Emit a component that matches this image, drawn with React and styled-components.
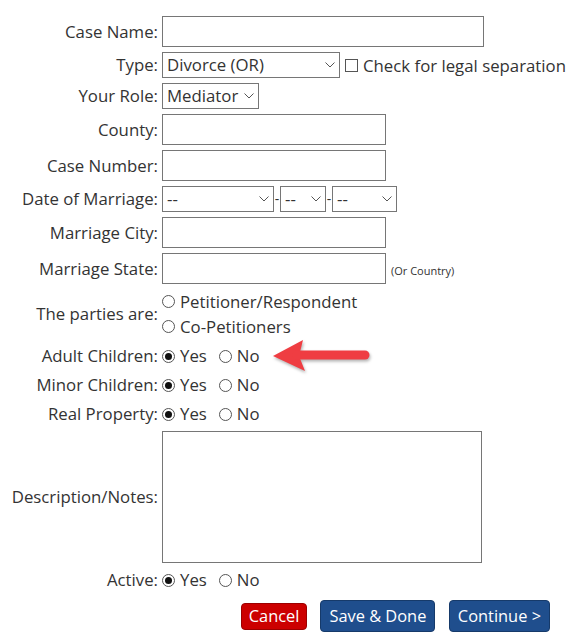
import React from "react";
import styled, { createGlobalStyle } from "styled-components";

const Global = createGlobalStyle`
  html, body { margin: 0; padding: 0; background: #fff; }
  body { font-family: "Open Sans", "Liberation Sans", sans-serif; font-size: 16.8px; color: #333; }
  * { box-sizing: border-box; }
`;

const Page = styled.div`
  width: 570px;
  height: 642px;
  padding-top: 16px;
  position: relative;
`;

const Form = styled.div`
  display: grid;
  grid-template-columns: 158px 1fr;
  column-gap: 4px;
  row-gap: 5px;
  align-items: center;
`;

const Label = styled.label`
  text-align: right;
  white-space: nowrap;
  line-height: 22px;
`;

const Field = styled.div`
  display: flex;
  align-items: center;
  position: relative;
  min-height: ${(p) => p.$h || 24}px;
`;

const TextInput = styled.input`
  width: ${(p) => p.$w}px;
  height: 31px;
  border: 1px solid #767676;
  border-radius: 0;
  padding: 0 4px;
  font: inherit;
  color: #333;
  background: #fff;
  margin: 0;
`;

const TextArea = styled.textarea`
  width: 320px;
  height: 132px;
  border: 1px solid #767676;
  border-radius: 0;
  font: inherit;
  resize: none;
  margin: 0;
  display: block;
`;

const SelectWrap = styled.div`
  position: relative;
  width: ${(p) => p.$w}px;
  height: 26px;
  flex: none;
`;

const Select = styled.select`
  appearance: none;
  -webkit-appearance: none;
  width: 100%;
  height: 100%;
  border: 1px solid #767676;
  border-radius: 0;
  background: #fff;
  font: inherit;
  color: #333;
  padding: 0 18px 0 4px;
  margin: 0;
  line-height: 24px;
`;

const Chevron = styled.svg`
  position: absolute;
  right: 5px;
  top: 10px;
  pointer-events: none;
`;

const Dash = styled.span`
  width: 6px;
  text-align: center;
  font-size: 14px;
  line-height: 1;
  flex: none;
`;

const CheckLabel = styled.label`
  display: inline-flex;
  align-items: center;
  margin-left: 5px;
  white-space: nowrap;
`;

const CheckBox = styled.input`
  appearance: none;
  -webkit-appearance: none;
  width: 13px;
  height: 13px;
  border: 1px solid #555;
  background: #fff;
  margin: 0 5px 0 0;
  border-radius: 0;
`;

const Note = styled.span`
  font-size: 11px;
  margin-left: 5px;
  align-self: center;
  padding-top: 4px;
`;

const RadioStack = styled.div`
  display: flex;
  flex-direction: column;
`;

const RadioRow = styled.div`
  display: flex;
  align-items: center;
  height: ${(p) => p.$h || 24}px;
  position: relative;
`;

const RadioOption = styled.label`
  display: inline-flex;
  align-items: center;
  margin-right: ${(p) => p.$mr || 0}px;
  white-space: nowrap;
  line-height: 22px;
`;

const Radio = styled.input`
  appearance: none;
  -webkit-appearance: none;
  width: 13px;
  height: 13px;
  border: 1px solid #555;
  border-radius: 50%;
  background: #fff;
  margin: 0 5px 0 0;
  display: grid;
  place-items: center;
  &:checked::after {
    content: "";
    width: 7px;
    height: 7px;
    border-radius: 50%;
    background: #111;
  }
`;

const ButtonRow = styled.div`
  display: flex;
  justify-content: flex-end;
  align-items: center;
  gap: 13.5px;
  padding-right: 20px;
  margin-top: 8px;
`;

const Button = styled.button`
  font: inherit;
  font-size: 16.4px;
  color: #fff;
  background: ${(p) => (p.$variant === "danger" ? "#cc0000" : "#1f4e8d")};
  border: 1px solid ${(p) => (p.$variant === "danger" ? "#9c0000" : "#163a6a")};
  border-radius: 4px;
  height: ${(p) => (p.$variant === "danger" ? 27 : 32)}px;
  padding: 0 ${(p) => (p.$variant === "danger" ? 6.5 : 8)}px;
  line-height: 1;
  cursor: pointer;
`;

const Arrow = styled.svg`
  position: absolute;
  left: 107px;
  top: -9px;
  filter: drop-shadow(1px 2px 1.5px rgba(0, 0, 0, 0.3));
  pointer-events: none;
`;

function ChevronIcon() {
  return (
    <Chevron width="10" height="6" viewBox="0 0 10 6">
      <path d="M0.5 0.5 L5 5 L9.5 0.5" fill="none" stroke="#555" strokeWidth="1" />
    </Chevron>
  );
}

function Dropdown({ w, children }) {
  return (
    <SelectWrap $w={w}>
      <Select defaultValue={children[0]}>
        {children.map((c) => (
          <option key={c}>{c}</option>
        ))}
      </Select>
      <ChevronIcon />
    </SelectWrap>
  );
}

function YesNo({ name, arrow }) {
  return (
    <RadioRow>
      <RadioOption $mr={12}>
        <Radio type="radio" name={name} defaultChecked />
        Yes
      </RadioOption>
      <RadioOption>
        <Radio type="radio" name={name} />
        No
      </RadioOption>
      {arrow && (
        <Arrow width="104" height="42" viewBox="0 0 104 42">
          <polygon points="4,21 34,5 30,21 36,36" fill="#ef3d42" />
          <line x1="28" y1="20" x2="96" y2="20" stroke="#ef3d42" strokeWidth="9" strokeLinecap="round" />
        </Arrow>
      )}
    </RadioRow>
  );
}

export default function App() {
  return (
    <Page>
      <Global />
      <Form>
        <Label>Case Name:</Label>
        <Field $h={31}>
          <TextInput $w={322} />
        </Field>

        <Label>Type:</Label>
        <Field $h={26}>
          <Dropdown w={178}>{["Divorce (OR)"]}</Dropdown>
          <CheckLabel>
            <CheckBox type="checkbox" />
            Check for legal separation
          </CheckLabel>
        </Field>

        <Label>Your Role:</Label>
        <Field $h={26}>
          <Dropdown w={97}>{["Mediator"]}</Dropdown>
        </Field>

        <Label>County:</Label>
        <Field $h={31}>
          <TextInput $w={224} />
        </Field>

        <Label>Case Number:</Label>
        <Field $h={31}>
          <TextInput $w={224} />
        </Field>

        <Label>Date of Marriage:</Label>
        <Field $h={26}>
          <Dropdown w={112}>{["--"]}</Dropdown>
          <Dash>-</Dash>
          <Dropdown w={46}>{["--"]}</Dropdown>
          <Dash>-</Dash>
          <Dropdown w={65}>{["--"]}</Dropdown>
        </Field>

        <Label>Marriage City:</Label>
        <Field $h={31}>
          <TextInput $w={224} />
        </Field>

        <Label>Marriage State:</Label>
        <Field $h={31}>
          <TextInput $w={224} />
          <Note>(Or Country)</Note>
        </Field>

        <Label>The parties are:</Label>
        <RadioStack>
          <RadioRow $h={25}>
            <RadioOption>
              <Radio type="radio" name="parties" />
              Petitioner/Respondent
            </RadioOption>
          </RadioRow>
          <RadioRow $h={25}>
            <RadioOption>
              <Radio type="radio" name="parties" />
              Co-Petitioners
            </RadioOption>
          </RadioRow>
        </RadioStack>

        <Label>Adult Children:</Label>
        <YesNo name="adult" arrow />

        <Label>Minor Children:</Label>
        <YesNo name="minor" />

        <Label>Real Property:</Label>
        <YesNo name="property" />

        <Label>Description/Notes:</Label>
        <Field $h={132}>
          <TextArea />
        </Field>

        <Label>Active:</Label>
        <YesNo name="active" />
      </Form>
      <ButtonRow>
        <Button $variant="danger">Cancel</Button>
        <Button>Save &amp; Done</Button>
        <Button>Continue &gt;</Button>
      </ButtonRow>
    </Page>
  );
}
